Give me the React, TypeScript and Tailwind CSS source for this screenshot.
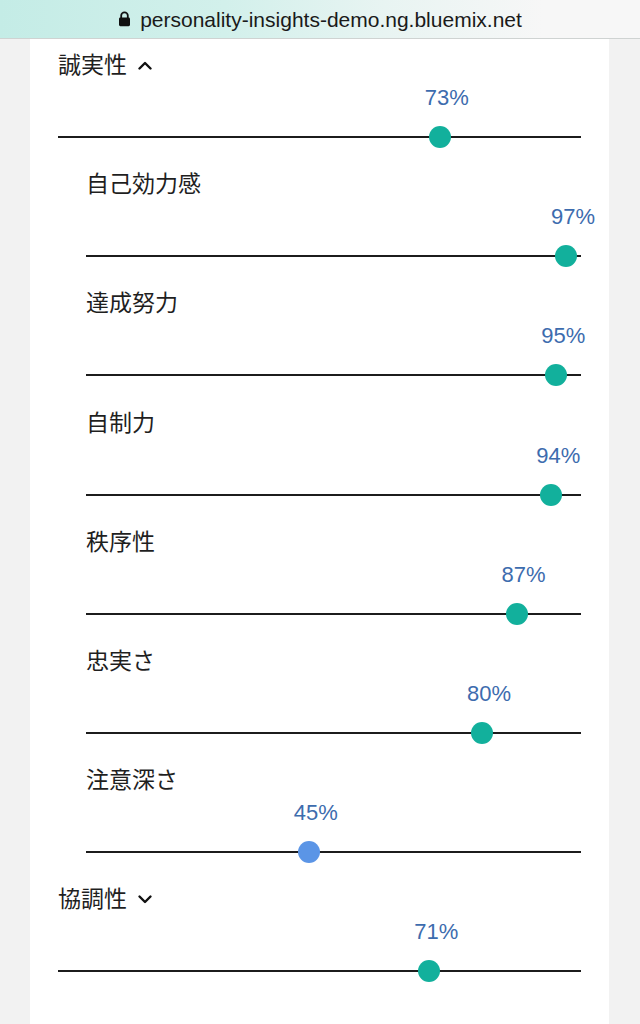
import React from "react";

type Trait = { label: string; value: number; color?: string };

const facets: Trait[] = [
  { label: "自己効力感", value: 97 },
  { label: "達成努力", value: 95 },
  { label: "自制力", value: 94 },
  { label: "秩序性", value: 87 },
  { label: "忠実さ", value: 80 },
  { label: "注意深さ", value: 45, color: "blue" },
];

function Chevron({ up }: { up?: boolean }) {
  return (
    <svg width="16" height="10" viewBox="0 0 16 10" className="shrink-0">
      <path
        d={up ? "M2.5 8.5 L8 3 L13.5 8.5" : "M2.5 2.5 L8 8 L13.5 2.5"}
        fill="none"
        stroke="#111"
        strokeWidth="2.4"
        strokeLinecap="round"
        strokeLinejoin="round"
      />
    </svg>
  );
}

function Lock() {
  return (
    <svg width="13" height="16" viewBox="0 0 13 16" className="mr-[9px]">
      <path d="M3.2 7 V4.6 a3.3 3.3 0 0 1 6.6 0 V7" fill="none" stroke="#111" strokeWidth="1.8" />
      <rect x="1" y="6.6" width="11" height="8.6" rx="1.4" fill="#111" />
    </svg>
  );
}

function Slider({ label, value, color, group, open }: Trait & { group?: boolean; open?: boolean }) {
  const knob = color === "blue" ? "bg-[#5b95e6]" : "bg-[#12b09c]";
  return (
    <div className={`flex flex-col mb-[23.2px] ${group ? "" : "pl-[28px]"}`}>
      <div className="flex items-center gap-[10px] h-[24px]">
        <span className="mb-[4px] text-[23px] leading-[24px] text-[#1f1f1f] [font-family:'Noto_Sans_CJK_JP',sans-serif]">
          {label}
        </span>
        {group && <Chevron up={open} />}
      </div>
      <div className="relative mt-[9px] h-[24px]">
        <span
          className="absolute top-0 -translate-x-1/2 text-[22px] leading-[24px] text-[#3d6cae] [font-family:'Liberation_Sans',Arial,sans-serif]"
          style={{ left: `calc(${value}% + 7px)` }}
        >
          {value}%
        </span>
      </div>
      <div className="relative mt-[15px] h-[24px] flex items-center">
        <div className="h-[2px] w-full bg-[#1c1c1c]" />
        <div
          className={`absolute top-[1px] w-[22px] h-[22px] -translate-x-1/2 rounded-full ${knob}`}
          style={{ left: `${value}%` }}
        />
      </div>
    </div>
  );
}

export default function App() {
  return (
    <div className="min-h-[1024px] bg-[#f2f2f2] flex flex-col">
      <header className="h-[39px] shrink-0 flex items-center justify-center border-b border-[#cfd3d2] bg-[linear-gradient(90deg,#c4ece6_0%,#d2f0eb_35%,#e8f4f2_60%,#f7f7f7_85%)]">
        <Lock />
        <span className="text-[21px] leading-none text-[#1a1a1a] [font-family:'Liberation_Sans',Arial,sans-serif]">
          personality-insights-demo.ng.bluemix.net
        </span>
      </header>
      <main className="flex-1 ml-[30px] mr-[31px] bg-white px-[28px] pt-[14px]">
        <Slider label="誠実性" value={73} group open />
        {facets.map((f) => (
          <Slider key={f.label} {...f} />
        ))}
        <Slider label="協調性" value={71} group />
      </main>
    </div>
  );
}
